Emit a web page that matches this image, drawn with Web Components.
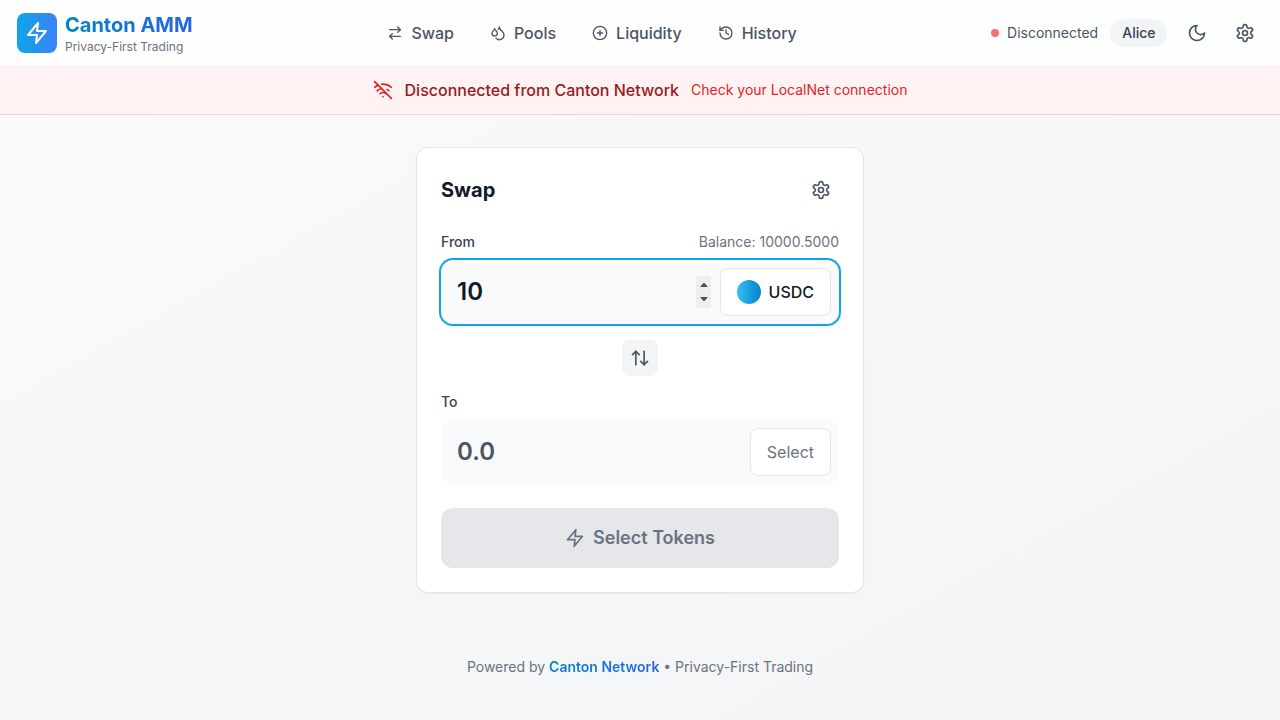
<!DOCTYPE html>
<html lang="en">
<head>
<meta charset="utf-8">
<title>Canton AMM</title>
<style>
html,body{margin:0;height:100%}
body{font-family:Inter,"Liberation Sans",sans-serif;font-size:16px;line-height:24px;color:#111827;-webkit-font-smoothing:antialiased;overflow:hidden}
</style>
</head>
<body>
<amm-app></amm-app>
<script>
const ICONS = {
  zap: '<path d="M13 2 3 14h9l-1 8 10-12h-9l1-8z"/>',
  swap: '<path d="m16 3 4 4-4 4"/><path d="M20 7H4"/><path d="m8 21-4-4 4-4"/><path d="M4 17h16"/>',
  pools: '<path d="M7 16.3c2.2 0 4-1.83 4-4.05 0-1.16-.57-2.26-1.71-3.19S7.29 6.75 7 5.3c-.29 1.45-1.14 2.84-2.29 3.76S3 11.1 3 12.25c0 2.22 1.8 4.05 4 4.05z"/><path d="M12.56 6.6A10.97 10.97 0 0 0 14 3.02c.5 2.5 2 4.9 4 6.5s3 3.5 3 5.5a6.98 6.98 0 0 1-11.91 4.97"/>',
  plus: '<circle cx="12" cy="12" r="10"/><path d="M8 12h8M12 8v8"/>',
  history: '<path d="M3 12a9 9 0 1 0 9-9 9.75 9.75 0 0 0-6.74 2.74L3 8"/><path d="M3 3v5h5"/><path d="M12 7v5l4 2"/>',
  moon: '<path d="M12 3a6 6 0 0 0 9 9 9 9 0 1 1-9-9Z"/>',
  gear: '<path d="M12.22 2h-.44a2 2 0 0 0-2 2v.18a2 2 0 0 1-1 1.73l-.43.25a2 2 0 0 1-2 0l-.15-.08a2 2 0 0 0-2.73.73l-.22.38a2 2 0 0 0 .73 2.73l.15.1a2 2 0 0 1 1 1.72v.51a2 2 0 0 1-1 1.74l-.15.09a2 2 0 0 0-.73 2.73l.22.38a2 2 0 0 0 2.73.73l.15-.08a2 2 0 0 1 2 0l.43.25a2 2 0 0 1 1 1.73V20a2 2 0 0 0 2 2h.44a2 2 0 0 0 2-2v-.18a2 2 0 0 1 1-1.73l.43-.25a2 2 0 0 1 2 0l.15.08a2 2 0 0 0 2.73-.73l.22-.39a2 2 0 0 0-.73-2.73l-.15-.08a2 2 0 0 1-1-1.74v-.5a2 2 0 0 1 1-1.74l.15-.09a2 2 0 0 0 .73-2.73l-.22-.38a2 2 0 0 0-2.73-.73l-.15.08a2 2 0 0 1-2 0l-.43-.25a2 2 0 0 1-1-1.73V4a2 2 0 0 0-2-2z"/><circle cx="12" cy="12" r="3"/>',
  wifiOff: '<path d="m2 2 20 20"/><path d="M8.5 16.5a5 5 0 0 1 7 0"/><path d="M2 8.82a15 15 0 0 1 4.17-2.65"/><path d="M10.66 5c4.01-.36 8.14.9 11.34 3.76"/><path d="M16.85 11.25a10 10 0 0 1 2.22 1.68"/><path d="M5 13a10 10 0 0 1 5.24-2.76"/><path d="M12 20h.01"/>',
  flip: '<path d="m3 8 4-4 4 4"/><path d="M7 4v16"/><path d="m21 16-4 4-4-4"/><path d="M17 20V4"/>'
};

function define(name, render) {
  customElements.define(name, class extends HTMLElement {
    connectedCallback() {
      if (this.shadowRoot) return;
      const t = document.createElement('template');
      t.innerHTML = render(this);
      this.attachShadow({ mode: 'open' }).append(t.content.cloneNode(true));
    }
  });
}

define('amm-icon', el => {
  const s = el.getAttribute('size') || 20;
  return `<style>:host{display:block;flex:none;width:${s}px;height:${s}px}svg{display:block}</style>
  <svg width="${s}" height="${s}" viewBox="0 0 24 24" fill="none" stroke="currentColor" stroke-width="2" stroke-linecap="round" stroke-linejoin="round">${ICONS[el.getAttribute('name')]}</svg>`;
});

define('amm-nav-item', el => `<style>
  :host{display:flex;align-items:center;gap:8px;padding:8px 16px;font-weight:500;color:#4b5563}
  </style><amm-icon name="${el.getAttribute('icon')}" size="16"></amm-icon><span><slot></slot></span>`);

define('amm-icon-button', el => `<style>
  :host{display:block;flex:none}
  button{display:block;border:0;margin:0;padding:8px;border-radius:8px;background:var(--button-bg,transparent);color:#4b5563}
  </style><button><amm-icon name="${el.getAttribute('icon')}"></amm-icon></button>`);

define('amm-header', () => `<style>
  :host{display:flex;justify-content:space-between;align-items:center;box-sizing:border-box;height:66px;padding:0 16px;background:rgba(255,255,255,.8) padding-box;border:1px solid #f9fafb;border-bottom-color:#fcf5f5}
  .brand,.right,nav,.status{display:flex;align-items:center}
  .brand{gap:8px}
  .logo{width:40px;height:40px;border-radius:8px;display:flex;align-items:center;justify-content:center;color:#fff;background:linear-gradient(to right,#0ea5e9,#3b82f6)}
  .name{font-size:20px;line-height:28px;font-weight:700;background:linear-gradient(to right,#0284c7,#2563eb);-webkit-background-clip:text;background-clip:text;color:transparent}
  .sub{font-size:12px;line-height:16px;color:#6b7280}
  nav{gap:4px;padding-left:1px}
  .right{gap:12px;font-size:14px;line-height:20px}
  .status{gap:8px;color:#4b5563}
  .status span:last-child{padding-left:.5px;margin-right:-.5px}
  .dot{width:8px;height:8px;border-radius:50%;background:#f87171}
  .user{padding:4px 11.5px 4px 12.5px;border-radius:14px;background:#f3f4f6;color:#374151;font-weight:500}
  </style>
  <div class="brand"><div class="logo"><amm-icon name="zap" size="24"></amm-icon></div>
    <div><div class="name">Canton AMM</div><div class="sub">Privacy-First Trading</div></div></div>
  <nav><amm-nav-item icon="swap">Swap</amm-nav-item><amm-nav-item icon="pools">Pools</amm-nav-item><amm-nav-item icon="plus">Liquidity</amm-nav-item><amm-nav-item icon="history">History</amm-nav-item></nav>
  <div class="right"><div class="status"><span class="dot"></span><span>Disconnected</span></div><span class="user">Alice</span><amm-icon-button icon="moon"></amm-icon-button><amm-icon-button icon="gear"></amm-icon-button></div>`);

define('amm-banner', () => `<style>
  :host{display:flex;justify-content:center;align-items:center;gap:12px;padding:12px 16px;background:#fef2f2;border-bottom:1px solid #fecaca;color:#dc2626}
  b{font-weight:500;color:#991b1b}
  span{font-size:14px;line-height:20px}
  </style><amm-icon name="wifiOff"></amm-icon><b>Disconnected from Canton Network</b><span>Check your LocalNet connection</span>`);

define('amm-stepper', () => `<style>
  :host{display:block;flex:none;width:15px;height:32px;background:#efefef}
  svg{display:block}
  </style><svg width="15" height="32" viewBox="0 0 15 32" fill="#505050"><path d="M4 11 7.5 7h1L12 11zM4 21h8l-3.5 4h-1z"/></svg>`);

define('amm-amount', el => `<style>
  :host{display:block}
  .labels{display:flex;justify-content:space-between;margin-bottom:8px;font-size:14px;line-height:20px;color:#6b7280}
  label{font-weight:500;color:#374151}
  .box{display:flex;align-items:center;gap:9px;box-sizing:border-box;height:64px;padding:0 8px 0 16px;border-radius:12px;background:#f9fafb}
  .box.active{box-shadow:0 0 0 2px #0ea5e9}
  input{flex:1;min-width:0;margin:0;padding:0;border:0;outline:0;background:transparent;font:600 24px/32px Inter,"Liberation Sans",sans-serif;height:32px;color:#111827;appearance:textfield}
  input::-webkit-inner-spin-button{appearance:none;margin:0}
  input[readonly]{color:#4b5563}
  </style>
  <div class="labels"><label>${el.getAttribute('label')}</label><slot name="balance"></slot></div>
  <div class="box ${el.hasAttribute('active') ? 'active' : ''}"><input ${el.hasAttribute('active') ? 'type="number"' : 'type="text" readonly'} value="${el.getAttribute('value')}">${el.hasAttribute('active') ? '<amm-stepper></amm-stepper>' : ''}<slot></slot></div>`);

define('amm-token', el => `<style>
  :host{display:flex;flex:none;align-items:center;gap:8px;box-sizing:border-box;height:48px;padding:0 16px;border:1px solid #e5e7eb;border-radius:8px;background:#fff;color:${el.hasAttribute('empty') ? '#6b7280' : '#111827'};font-weight:${el.hasAttribute('empty') ? 400 : 500}}
  i{width:24px;height:24px;border-radius:50%;background:linear-gradient(to right,#38bdf8,#0284c7)}
  </style>${el.hasAttribute('empty') ? '' : '<i></i>'}<span><slot></slot></span>`);

define('amm-swap-card', () => `<style>
  :host{display:block;box-sizing:border-box;width:448px;padding:24px;border:1px solid #e5e7eb;border-radius:12px;background:#fff;box-shadow:0 1px 2px rgba(0,0,0,.05)}
  header{display:flex;justify-content:space-between;align-items:center;margin-bottom:24px}
  h2{margin:0;font-size:20px;line-height:28px;font-weight:700}
  .flip{display:flex;justify-content:center;margin:16px 0;--button-bg:#f3f4f6}
  .cta{display:flex;align-items:center;justify-content:center;gap:8px;width:100%;height:60px;margin-top:24px;padding:0;border:0;border-radius:12px;background:#e5e7eb;color:#6b7280;font:600 18px/28px Inter,"Liberation Sans",sans-serif}
  </style>
  <header><h2>Swap</h2><amm-icon-button icon="gear"></amm-icon-button></header>
  <amm-amount label="From" value="10" active><span slot="balance">Balance: 10000.5000</span><amm-token>USDC</amm-token></amm-amount>
  <div class="flip"><amm-icon-button icon="flip"></amm-icon-button></div>
  <amm-amount label="To" value="0.0"><amm-token empty>Select</amm-token></amm-amount>
  <button class="cta"><amm-icon name="zap"></amm-icon><span>Select Tokens</span></button>`);

define('amm-footer', () => `<style>
  :host{display:block;text-align:center;font-size:14px;line-height:20px;color:#6b7280}
  b{font-weight:600;background:linear-gradient(to right,#0284c7,#2563eb);-webkit-background-clip:text;background-clip:text;color:transparent}
  </style>Powered by <b>Canton Network</b> • Privacy-First Trading`);

define('amm-app', () => `<style>
  :host{display:flex;flex-direction:column;min-height:100vh;background:linear-gradient(to bottom right,#f9fafb,#f3f4f6)}
  main{display:flex;flex-direction:column;align-items:center;padding:32px 16px;gap:64px}
  </style><amm-header></amm-header><amm-banner></amm-banner><main><amm-swap-card></amm-swap-card><amm-footer></amm-footer></main>`);
</script>
</body>
</html>
